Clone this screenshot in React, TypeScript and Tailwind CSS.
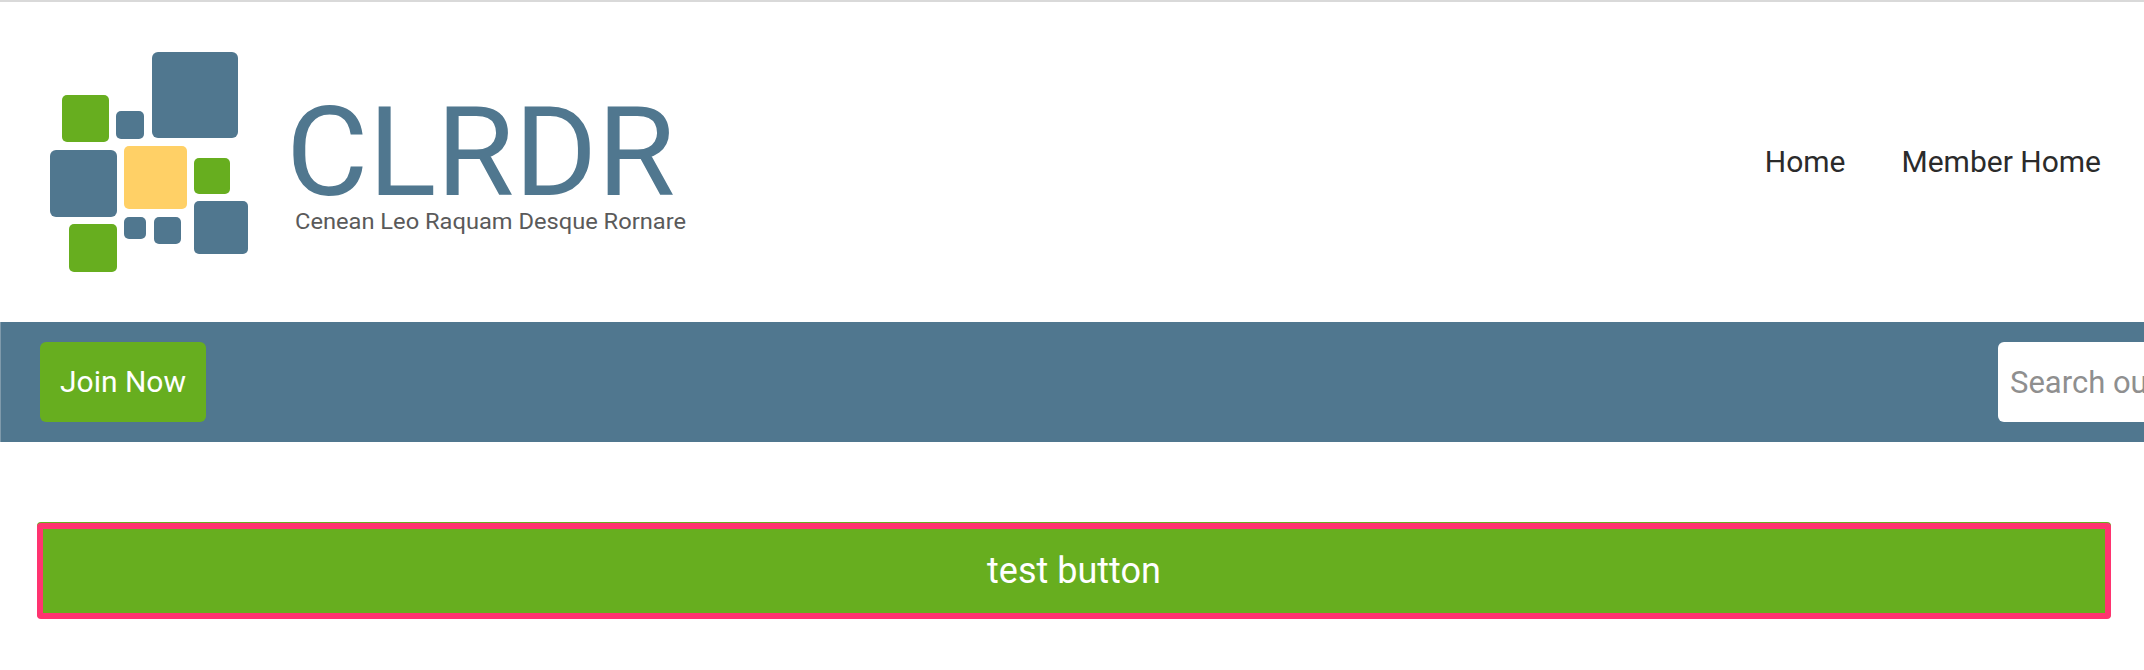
import React from "react";

const BLUE = "#50778f";
const GREEN = "#67ae1f";

// logo squares, in page pixels
const SQUARES = [
  { x: 152, y: 52, w: 86, h: 86, r: 6, fill: BLUE },
  { x: 62, y: 95, w: 47, h: 47, r: 5, fill: GREEN },
  { x: 116, y: 111, w: 28, h: 28, r: 5, fill: BLUE },
  { x: 50, y: 150, w: 67, h: 67, r: 6, fill: BLUE },
  { x: 124, y: 146, w: 63, h: 63, r: 5, fill: "#ffd066" },
  { x: 194, y: 158, w: 36, h: 36, r: 5, fill: GREEN },
  { x: 194, y: 201, w: 54, h: 53, r: 5, fill: BLUE },
  { x: 69, y: 224, w: 48, h: 48, r: 5, fill: GREEN },
  { x: 124, y: 217, w: 22, h: 22, r: 5, fill: BLUE },
  { x: 154, y: 217, w: 27, h: 27, r: 5, fill: BLUE },
];

const Logo = () => (
  <svg width="700" height="320" viewBox="0 2 700 320" className="block">
    {SQUARES.map((s) => (
      <rect key={`${s.x}-${s.y}`} x={s.x} y={s.y} width={s.w} height={s.h} rx={s.r} fill={s.fill} />
    ))}
    <text
      x="286"
      y="195"
      fontFamily="Roboto, sans-serif"
      fontWeight="400"
      fontSize="124"
      fill={BLUE}
      textLength="389"
      lengthAdjust="spacingAndGlyphs"
    >
      CLRDR
    </text>
    <text
      x="295"
      y="229"
      fontFamily="Roboto, sans-serif"
      fontSize="22"
      fill="#5a5a5a"
      textLength="391"
      lengthAdjust="spacingAndGlyphs"
    >
      Cenean Leo Raquam Desque Rornare
    </text>
  </svg>
);

const App = () => {
  return (
    <div className="min-h-[670px] bg-white overflow-hidden font-['Roboto',sans-serif]">
      <div className="h-[2px] bg-[#d9d9d9]" />

      <header className="h-[320px] flex items-start justify-between">
        <Logo />
        <nav className="flex gap-[56px] pt-[140px] pr-[43px] text-[30px] leading-[40px] text-[#2b2b2b]">
          <a href="#">Home</a>
          <a href="#">Member Home</a>
        </nav>
      </header>

      <div className="h-[120px] bg-[#50778f] border-l border-l-[#7f9aab] flex items-center justify-between pl-[39px]">
        <a
          href="#"
          className="h-[80px] px-[20px] pb-[2px] flex items-center rounded-[6px] bg-[#67ae1f] text-white text-[30px]"
        >
          Join Now
        </a>
        <input
          type="text"
          placeholder="Search our site"
          className="h-[80px] w-[146px] pl-[12px] rounded-l-[6px] bg-white text-[31px] placeholder:text-[#8f8f8f] outline-none"
        />
      </div>

      <main className="pt-[81px] pl-[37px] pr-[33px]">
        <button className="w-full h-[96px] rounded-[4px] border-[6px] border-[#ff3370] bg-[#67ae1f] text-white text-[36px] shadow-[0_-1px_0_#67ae1f]">
          test button
        </button>
      </main>
    </div>
  );
};

export default App;
